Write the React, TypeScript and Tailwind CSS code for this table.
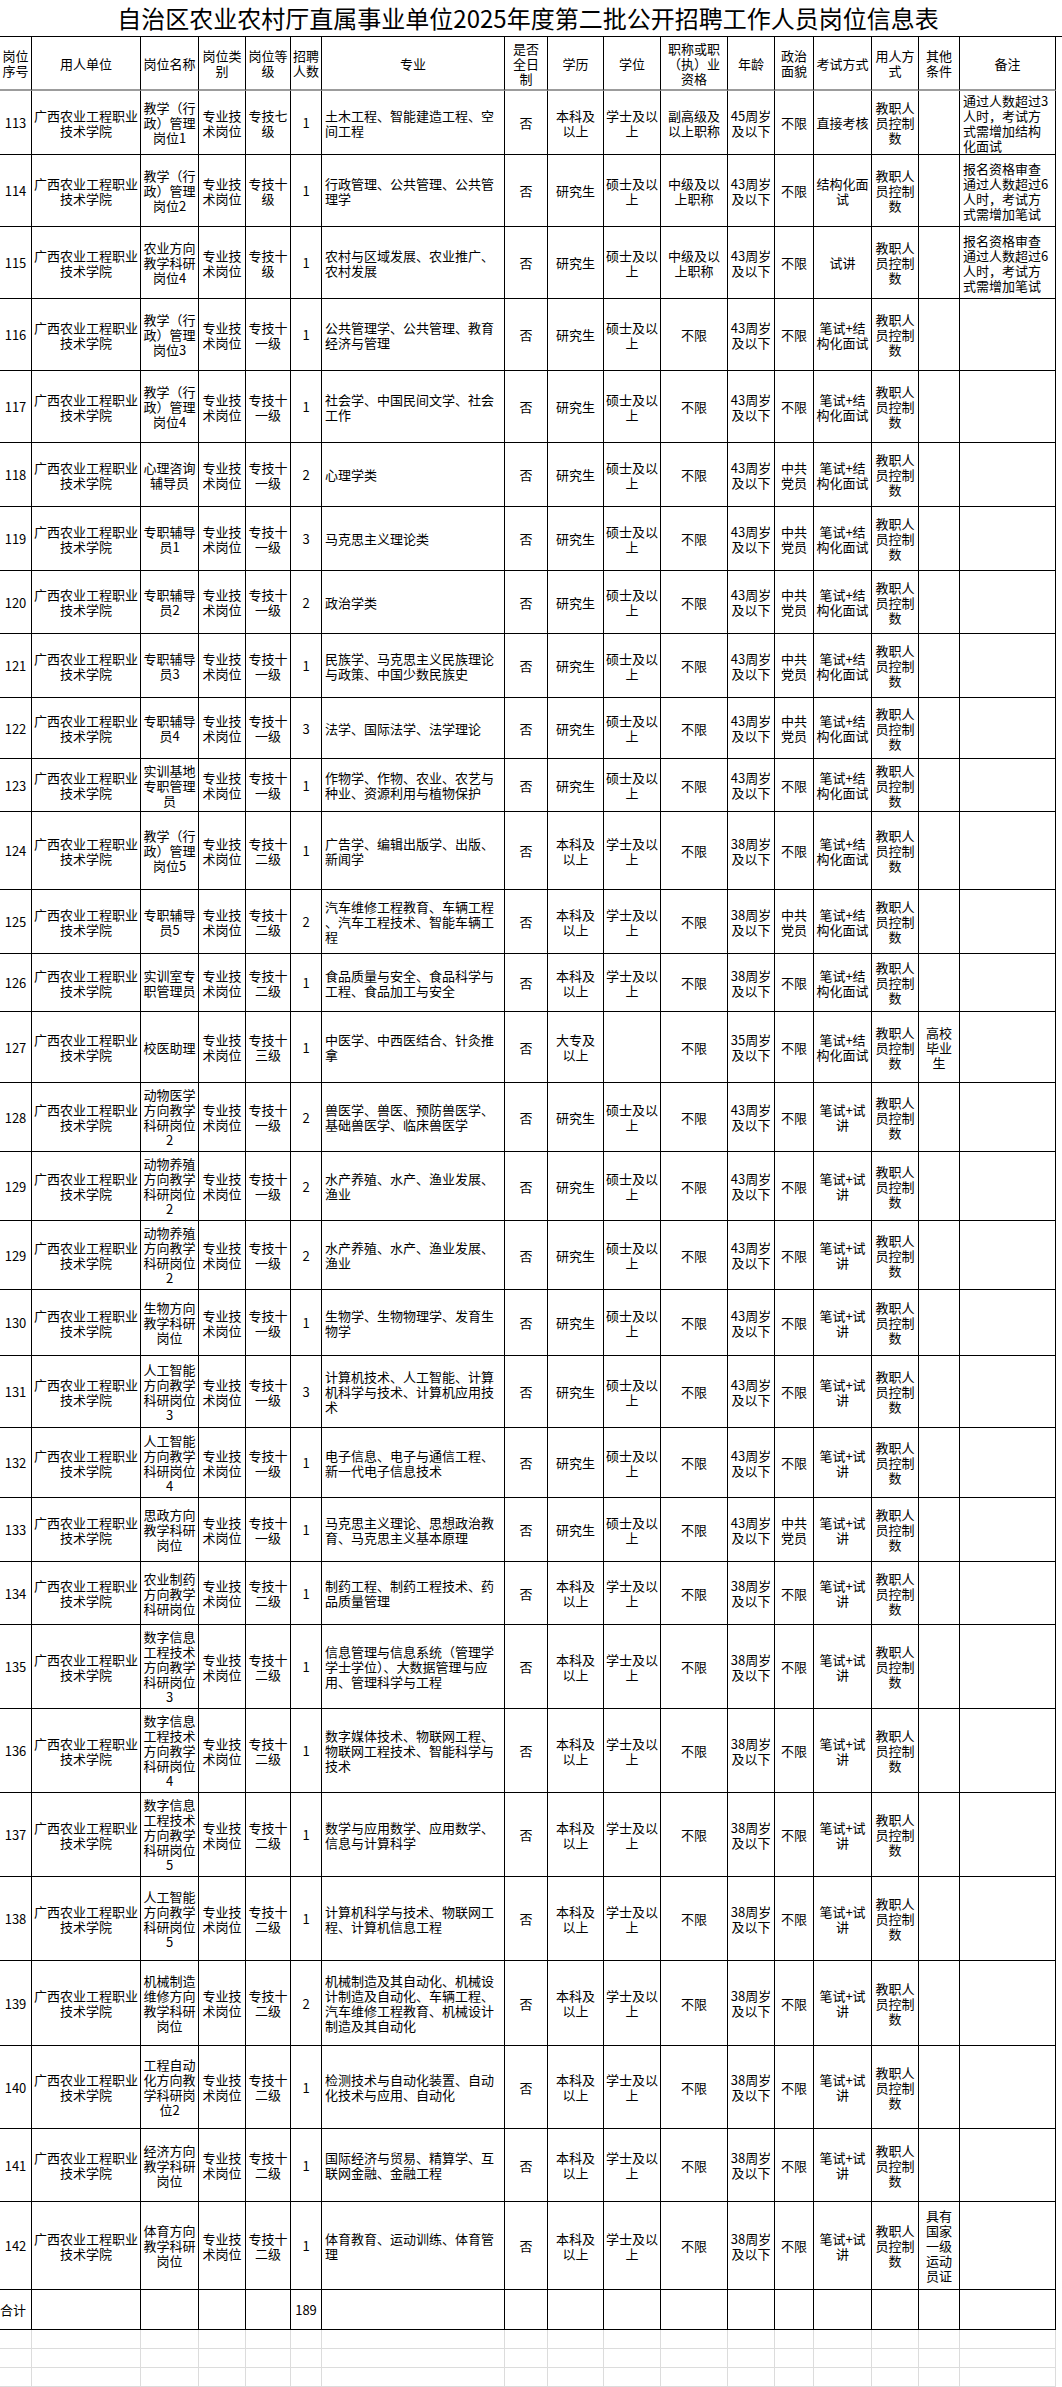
import clsx from "clsx";

const COLS =
  "grid grid-cols-[32px_109px_58px_47px_45px_31px_183px_43px_56px_57px_67px_47px_39px_58px_47px_41px_96px]";

const headers = [
  "岗位\n序号",
  "用人单位",
  "岗位名称",
  "岗位类\n别",
  "岗位等\n级",
  "招聘\n人数",
  "专业",
  "是否\n全日\n制",
  "学历",
  "学位",
  "职称或职\n（执）业\n资格",
  "年龄",
  "政治\n面貌",
  "考试方式",
  "用人方\n式",
  "其他\n条件",
  "备注",
];

const U = "广西农业工程职业\n技术学院";
const T = "专业技\n术岗位";
const J = "教职人\n员控制\n数";
const YJS = "研究生";
const BK = "本科及\n以上";
const SS = "硕士及以\n上";
const XS = "学士及以\n上";
const A43 = "43周岁\n及以下";
const A38 = "38周岁\n及以下";
const DY = "中共\n党员";
const BX = "不限";
const JG = "笔试+结\n构化面试";
const SJ = "笔试+试\n讲";
const G11 = "专技十\n一级";
const G12 = "专技十\n二级";

type Row = { h: string; cells: string[] };

function r(
  h: string,
  no: string,
  name: string,
  grade: string,
  num: string,
  major: string,
  edu: string,
  degree: string,
  title: string,
  age: string,
  party: string,
  exam: string,
  other = "",
  note = ""
): Row {
  return {
    h,
    cells: [no, U, name, T, grade, num, major, "否", edu, degree, title, age, party, exam, J, other, note],
  };
}

const rows: Row[] = [
  r("h-[64px]", "113", "教学（行\n政）管理\n岗位1", "专技七\n级", "1", "土木工程、智能建造工程、空\n间工程", BK, XS, "副高级及\n以上职称", "45周岁\n及以下", BX, "直接考核", "", "通过人数超过3\n人时，考试方\n式需增加结构\n化面试"),
  r("h-[72px]", "114", "教学（行\n政）管理\n岗位2", "专技十\n级", "1", "行政管理、公共管理、公共管\n理学", YJS, SS, "中级及以\n上职称", A43, BX, "结构化面\n试", "", "报名资格审查\n通过人数超过6\n人时，考试方\n式需增加笔试"),
  r("h-[72px]", "115", "农业方向\n教学科研\n岗位4", "专技十\n级", "1", "农村与区域发展、农业推广、\n农村发展", YJS, SS, "中级及以\n上职称", A43, BX, "试讲", "", "报名资格审查\n通过人数超过6\n人时，考试方\n式需增加笔试"),
  r("h-[72px]", "116", "教学（行\n政）管理\n岗位3", G11, "1", "公共管理学、公共管理、教育\n经济与管理", YJS, SS, BX, A43, BX, JG),
  r("h-[72px]", "117", "教学（行\n政）管理\n岗位4", G11, "1", "社会学、中国民间文学、社会\n工作", YJS, SS, BX, A43, BX, JG),
  r("h-[64px]", "118", "心理咨询\n辅导员", G11, "2", "心理学类", YJS, SS, BX, A43, DY, JG),
  r("h-[64px]", "119", "专职辅导\n员1", G11, "3", "马克思主义理论类", YJS, SS, BX, A43, DY, JG),
  r("h-[63px]", "120", "专职辅导\n员2", G11, "2", "政治学类", YJS, SS, BX, A43, DY, JG),
  r("h-[64px]", "121", "专职辅导\n员3", G11, "1", "民族学、马克思主义民族理论\n与政策、中国少数民族史", YJS, SS, BX, A43, DY, JG),
  r("h-[61px]", "122", "专职辅导\n员4", G11, "3", "法学、国际法学、法学理论", YJS, SS, BX, A43, DY, JG),
  r("h-[53px]", "123", "实训基地\n专职管理\n员", G11, "1", "作物学、作物、农业、农艺与\n种业、资源利用与植物保护", YJS, SS, BX, A43, BX, JG),
  r("h-[78px]", "124", "教学（行\n政）管理\n岗位5", G12, "1", "广告学、编辑出版学、出版、\n新闻学", BK, XS, BX, A38, BX, JG),
  r("h-[64px]", "125", "专职辅导\n员5", G12, "2", "汽车维修工程教育、车辆工程\n、汽车工程技术、智能车辆工\n程", BK, XS, BX, A38, DY, JG),
  r("h-[58px]", "126", "实训室专\n职管理员", G12, "1", "食品质量与安全、食品科学与\n工程、食品加工与安全", BK, XS, BX, A38, BX, JG),
  r("h-[71px]", "127", "校医助理", "专技十\n三级", "1", "中医学、中西医结合、针灸推\n拿", "大专及\n以上", "", BX, "35周岁\n及以下", BX, JG, "高校\n毕业\n生"),
  r("h-[69px]", "128", "动物医学\n方向教学\n科研岗位\n2", G11, "2", "兽医学、兽医、预防兽医学、\n基础兽医学、临床兽医学", YJS, SS, BX, A43, BX, SJ),
  r("h-[69px]", "129", "动物养殖\n方向教学\n科研岗位\n2", G11, "2", "水产养殖、水产、渔业发展、\n渔业", YJS, SS, BX, A43, BX, SJ),
  r("h-[69px]", "129", "动物养殖\n方向教学\n科研岗位\n2", G11, "2", "水产养殖、水产、渔业发展、\n渔业", YJS, SS, BX, A43, BX, SJ),
  r("h-[66px]", "130", "生物方向\n教学科研\n岗位", G11, "1", "生物学、生物物理学、发育生\n物学", YJS, SS, BX, A43, BX, SJ),
  r("h-[72px]", "131", "人工智能\n方向教学\n科研岗位\n3", G11, "3", "计算机技术、人工智能、计算\n机科学与技术、计算机应用技\n术", YJS, SS, BX, A43, BX, SJ),
  r("h-[70px]", "132", "人工智能\n方向教学\n科研岗位\n4", G11, "1", "电子信息、电子与通信工程、\n新一代电子信息技术", YJS, SS, BX, A43, BX, SJ),
  r("h-[64px]", "133", "思政方向\n教学科研\n岗位", G11, "1", "马克思主义理论、思想政治教\n育、马克思主义基本原理", YJS, SS, BX, A43, DY, SJ),
  r("h-[63px]", "134", "农业制药\n方向教学\n科研岗位", G12, "1", "制药工程、制药工程技术、药\n品质量管理", BK, XS, BX, A38, BX, SJ),
  r("h-[84px]", "135", "数字信息\n工程技术\n方向教学\n科研岗位\n3", G12, "1", "信息管理与信息系统（管理学\n学士学位）、大数据管理与应\n用、管理科学与工程", BK, XS, BX, A38, BX, SJ),
  r("h-[84px]", "136", "数字信息\n工程技术\n方向教学\n科研岗位\n4", G12, "1", "数字媒体技术、物联网工程、\n物联网工程技术、智能科学与\n技术", BK, XS, BX, A38, BX, SJ),
  r("h-[84px]", "137", "数字信息\n工程技术\n方向教学\n科研岗位\n5", G12, "1", "数学与应用数学、应用数学、\n信息与计算科学", BK, XS, BX, A38, BX, SJ),
  r("h-[84px]", "138", "人工智能\n方向教学\n科研岗位\n5", G12, "1", "计算机科学与技术、物联网工\n程、计算机信息工程", BK, XS, BX, A38, BX, SJ),
  r("h-[85px]", "139", "机械制造\n维修方向\n教学科研\n岗位", G12, "2", "机械制造及其自动化、机械设\n计制造及自动化、车辆工程、\n汽车维修工程教育、机械设计\n制造及其自动化", BK, XS, BX, A38, BX, SJ),
  r("h-[83px]", "140", "工程自动\n化方向教\n学科研岗\n位2", G12, "1", "检测技术与自动化装置、自动\n化技术与应用、自动化", BK, XS, BX, A38, BX, SJ),
  r("h-[73px]", "141", "经济方向\n教学科研\n岗位", G12, "1", "国际经济与贸易、精算学、互\n联网金融、金融工程", BK, XS, BX, A38, BX, SJ),
  r("h-[88px]", "142", "体育方向\n教学科研\n岗位", G12, "1", "体育教育、运动训练、体育管\n理", BK, XS, BX, A38, BX, SJ, "具有\n国家\n一级\n运动\n员证"),
];

const LEFT = [6, 16];

function Cell({ text, i, className }: { text: string; i: number; className?: string }) {
  return (
    <div
      className={clsx(
        "flex items-center overflow-hidden border-r border-b border-black whitespace-pre text-[13px] leading-[15px]",
        LEFT.includes(i) ? "justify-start text-left pl-[3px]" : "justify-center text-center",
        className
      )}
    >
      {text}
    </div>
  );
}

export default function App() {
  const total = ["合计", "", "", "", "", "189", "", "", "", "", "", "", "", "", "", "", ""];
  return (
    <div className="w-[1062px] bg-white text-black font-['Noto_Sans_CJK_SC',sans-serif]">
      <div className="w-[1056px] h-[36px] flex items-center justify-center text-[24px] leading-none">
        自治区农业农村厅直属事业单位2025年度第二批公开招聘工作人员岗位信息表
      </div>

      <div className={clsx(COLS, "h-[55px] border-t border-black")}>
        {headers.map((t, i) => (
          <Cell key={i} text={t} i={i === 6 || i === 16 ? -1 : i} className="border-b-2 border-b-[#9c9c9c]" />
        ))}
      </div>

      {rows.map((row, k) => (
        <div key={k} className={clsx(COLS, row.h)}>
          {row.cells.map((t, i) => (
            <Cell key={i} text={t} i={i} />
          ))}
        </div>
      ))}

      <div className={clsx(COLS, "h-[40px]")}>
        {total.map((t, i) => (
          <Cell key={i} text={t} i={i} className={i === 0 ? "justify-start pl-0" : ""} />
        ))}
      </div>

      {[0, 1, 2].map((k) => (
        <div key={k} className={clsx(COLS, "h-[19px]")}>
          {headers.map((_, i) => (
            <div key={i} className="border-r border-b border-[#dcdcdc]" />
          ))}
        </div>
      ))}
    </div>
  );
}
